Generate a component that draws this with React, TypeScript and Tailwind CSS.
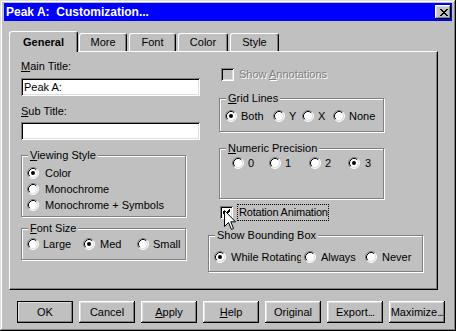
import React from 'react';

// classic win95 bevels
const raised =
  'shadow-[inset_-1px_-1px_#000,inset_1px_1px_#fff,inset_-2px_-2px_#808080,inset_2px_2px_#dfdfdf]';
const sunken =
  'shadow-[inset_1px_1px_#808080,inset_-1px_-1px_#fff,inset_2px_2px_#000,inset_-2px_-2px_#dfdfdf]';

const CHECK = ['......x', '.....xx', 'x...xxx', 'xx.xxx.', 'xxxxx..', '.xxx...', '..x....'];
const CLOSE = ['xx....xx', '.xx..xx.', '..xxxx..', '...xx...', '..xxxx..', '.xx..xx.', 'xx....xx'];

const Pixels: React.FC<{ rows: string[]; color?: string }> = ({ rows, color = '#000' }) => (
  <svg width={rows[0].length} height={rows.length} shapeRendering="crispEdges">
    {rows.flatMap((r, y) =>
      r.split('').map((c, x) =>
        c === 'x' ? <rect key={`${x}-${y}`} x={x} y={y} width={1} height={1} fill={color} /> : null
      )
    )}
  </svg>
);

const U: React.FC<{ children: React.ReactNode }> = ({ children }) => (
  <span className="underline decoration-1 underline-offset-1">{children}</span>
);

const Radio: React.FC<{ checked?: boolean }> = ({ checked }) => (
  <svg width="12" height="12" viewBox="0 0 12 12" className="shrink-0">
    <circle cx="6" cy="6" r="5" fill="#fff" />
    <path d="M2.11 9.89 A5.5 5.5 0 0 1 9.89 2.11" stroke="#808080" fill="none" />
    <path d="M9.89 2.11 A5.5 5.5 0 0 1 2.11 9.89" stroke="#fff" fill="none" />
    <path d="M2.82 9.18 A4.5 4.5 0 0 1 9.18 2.82" stroke="#000" fill="none" />
    <path d="M9.18 2.82 A4.5 4.5 0 0 1 2.82 9.18" stroke="#dfdfdf" fill="none" />
    {checked && <circle cx="6" cy="6" r="2" fill="#000" />}
  </svg>
);

const Checkbox: React.FC<{ checked?: boolean; disabled?: boolean }> = ({ checked, disabled }) => (
  <div
    className={`w-[13px] h-[13px] shrink-0 flex items-center justify-center ${sunken} ${
      disabled ? 'bg-[#c0c0c0]' : 'bg-white'
    }`}
  >
    {checked && <Pixels rows={CHECK} />}
  </div>
);

const RadioItem: React.FC<{ label: React.ReactNode; checked?: boolean; className?: string }> = ({
  label,
  checked,
  className = '',
}) => (
  <div className={`flex items-center shrink-0 ${className}`}>
    <Radio checked={checked} />
    {label}
  </div>
);

const GroupBox: React.FC<{ label: React.ReactNode; className?: string; children: React.ReactNode }> = ({
  label,
  className = '',
  children,
}) => (
  <div className={`border border-[#808080] shadow-[1px_1px_0_#fff,inset_1px_1px_0_#fff] ${className}`}>
    <div className="-mt-[7px] ml-[6px] w-fit px-[2px] bg-[#c0c0c0]">{label}</div>
    {children}
  </div>
);

const Tab: React.FC<{ label: string; active?: boolean; className?: string }> = ({ label, active, className = '' }) =>
  active ? (
    <div
      className={`relative z-10 -mb-px h-[21px] flex items-center justify-center bg-[#c0c0c0] border-l border-t border-white border-r border-r-black rounded-t-[3px] shadow-[inset_-1px_0_#808080] font-bold ${className}`}
    >
      {label}
    </div>
  ) : (
    <div
      className={`h-[18px] flex items-center justify-center bg-[#c0c0c0] border-l border-t border-white border-r border-r-black rounded-t-[3px] shadow-[inset_-1px_0_#808080] ${className}`}
    >
      {label}
    </div>
  );

const Button: React.FC<{ children: React.ReactNode; isDefault?: boolean }> = ({ children, isDefault }) => (
  <div
    className={`w-[56px] h-[22px] flex items-center justify-center whitespace-nowrap overflow-hidden ${raised} ${
      isDefault ? 'outline outline-1 outline-black -outline-offset-1' : ''
    }`}
  >
    {children}
  </div>
);

const Dots = () => <span className="tracking-[-1px]">...</span>;

const App: React.FC = () => {
  return (
    <div
      className={`w-[456px] h-[331px] bg-[#c0c0c0] pt-[3px] px-[4px] text-[11px] leading-[13px] text-black font-['Liberation_Sans',Arial,sans-serif] shadow-[inset_-1px_-1px_#000,inset_1px_1px_#dfdfdf,inset_-2px_-2px_#808080,inset_2px_2px_#fff]`}
    >
      {/* title bar */}
      <div className="h-[18px] bg-[#0000ff] flex items-center pl-[2px] pr-[1px]">
        <span className="font-bold text-white whitespace-pre text-[12px]">Peak A:  Customization...</span>
        <div className={`ml-auto w-[16px] h-[14px] bg-[#c0c0c0] flex items-center justify-center pl-[1px] ${raised}`}>
          <Pixels rows={CLOSE} />
        </div>
      </div>

      {/* tabs */}
      <div className="mt-[10px] ml-[5px] h-[20px] flex items-end">
        <Tab label="General" active className="w-[69px]" />
        <Tab label="More" className="ml-[1px] w-[48px]" />
        <Tab label="Font" className="ml-[2px] w-[47px]" />
        <Tab label="Color" className="ml-[2px] w-[50px]" />
        <Tab label="Style" className="ml-[2px] w-[49px]" />
      </div>

      {/* tab panel */}
      <div className="ml-[5px] w-[429px] h-[239px] flex border-l border-t border-white border-r border-b border-r-black border-b-black shadow-[inset_-1px_-1px_#808080]">
        {/* left column */}
        <div className="ml-[11px] w-[180px] flex flex-col">
          <div className="mt-[8px]">
            <U>M</U>ain Title:
          </div>
          <div className={`mt-[5px] w-[179px] h-[18px] bg-white pl-[3px] flex items-center ${sunken}`}>Peak A:</div>
          <div className="mt-[9px]">
            <U>S</U>ub Title:
          </div>
          <div className={`mt-[4px] w-[179px] h-[18px] bg-white ${sunken}`} />

          <GroupBox
            label={
              <>
                <U>V</U>iewing Style
              </>
            }
            className="mt-[15px] w-[165px] h-[62px]"
          >
            <div className="mt-[3px] pl-[5px] flex flex-col">
              <RadioItem checked label={<span className="ml-[6px]">Color</span>} className="h-[16px]" />
              <RadioItem label={<span className="ml-[6px]">Monochrome</span>} className="h-[16px]" />
              <RadioItem label={<span className="ml-[6px]">Monochrome + Symbols</span>} className="h-[16px]" />
            </div>
          </GroupBox>

          <GroupBox
            label={
              <>
                <U>F</U>ont Size
              </>
            }
            className="mt-[11px] w-[165px] h-[32px]"
          >
            <div className="mt-[1px] h-[16px] pl-[5px] flex">
              <RadioItem label={<span className="ml-[4px]">Large</span>} className="w-[56px]" />
              <RadioItem checked label={<span className="ml-[5px]">Med</span>} className="w-[54px]" />
              <RadioItem label={<span className="ml-[4px]">Small</span>} />
            </div>
          </GroupBox>
        </div>

        {/* right column */}
        <div className="ml-[7px] w-[215px] flex flex-col">
          <div className="mt-[14px] h-[16px] flex items-center">
            <div className="ml-[13px]">
              <Checkbox disabled />
            </div>
            <span className="ml-[5px] text-[#808080] [text-shadow:1px_1px_0_#fff]">
              Show <U>A</U>nnotations
            </span>
          </div>

          <GroupBox
            label={
              <>
                <U>G</U>rid Lines
              </>
            }
            className="mt-[16px] ml-[11px] w-[165px] h-[34px]"
          >
            <div className="mt-[3px] h-[16px] pl-[5px] flex">
              <RadioItem checked label={<span className="ml-[4px]">Both</span>} className="w-[48px]" />
              <RadioItem label={<span className="ml-[4px]">Y</span>} className="w-[29px]" />
              <RadioItem label={<span className="ml-[4px]">X</span>} className="w-[31px]" />
              <RadioItem label={<span className="ml-[4px]">None</span>} />
            </div>
          </GroupBox>

          <GroupBox
            label={
              <>
                <U>N</U>umeric Precision
              </>
            }
            className="mt-[16px] ml-[11px] w-[165px] h-[51px]"
          >
            <div className="h-[16px] pl-[12px] flex">
              <RadioItem label={<span className="ml-[4px]">0</span>} className="w-[37px]" />
              <RadioItem label={<span className="ml-[4px]">1</span>} className="w-[40px]" />
              <RadioItem label={<span className="ml-[4px]">2</span>} className="w-[39px]" />
              <RadioItem checked label={<span className="ml-[5px]">3</span>} />
            </div>
          </GroupBox>

          <div className="relative mt-[5px] h-[17px] flex items-center">
            <div className="ml-[12px]">
              <Checkbox checked />
            </div>
            <span className="ml-[4px] w-[92px] h-[17px] border border-dotted border-black px-[1px] flex items-center whitespace-nowrap tracking-[-0.2px]">
              Rotation Animation
            </span>
            {/* mouse pointer */}
            <svg width="13" height="21" viewBox="0 0 13 21" className="absolute left-[16px] top-[6px]">
              <path
                d="M0.5 0.5 V16.5 L4.5 12.5 L7.5 19.5 L9.5 18.5 L6.8 11.8 H11.5 Z"
                fill="#fff"
                stroke="#000"
                strokeLinejoin="miter"
              />
            </svg>
          </div>

          <GroupBox label="Show Bounding Box" className="mt-[14px] w-[215px] h-[37px]">
            <div className="mt-[7px] h-[16px] pl-[5px] flex">
              <RadioItem
                checked
                label={<span className="ml-[5px] w-[70px] overflow-hidden whitespace-nowrap">While Rotating</span>}
                className="w-[90px]"
              />
              <RadioItem label={<span className="ml-[5px]">Always</span>} className="w-[61px]" />
              <RadioItem label={<span className="ml-[5px]">Never</span>} />
            </div>
          </GroupBox>
        </div>
      </div>

      {/* buttons */}
      <div className="mt-[11px] ml-[13px] flex gap-[6px]">
        <Button isDefault>OK</Button>
        <Button>Cancel</Button>
        <Button>
          <U>A</U>pply
        </Button>
        <Button>
          <U>H</U>elp
        </Button>
        <Button>Original</Button>
        <Button>
          Export<Dots />
        </Button>
        <Button>
          Maximize<Dots />
        </Button>
      </div>
    </div>
  );
};

export default App;
